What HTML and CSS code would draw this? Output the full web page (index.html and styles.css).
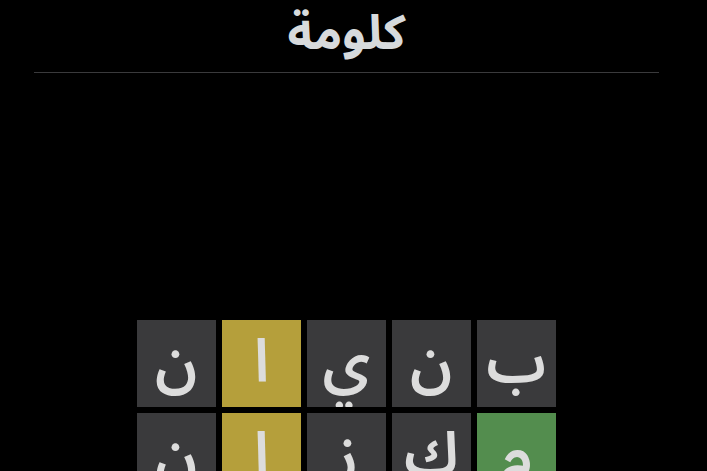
FILE: index.html
```html
<!DOCTYPE html>
<html lang="ar" dir="rtl">
<head>
<meta charset="utf-8">
<title>كلومة</title>
<link rel="stylesheet" href="styles.css">
</head>
<body>
<div class="app">
  <header class="header">
    <h1 class="title">كلومة</h1>
  </header>
  <main class="board">
    <div class="row">
      <div class="tile absent">ب</div>
      <div class="tile absent">ن</div>
      <div class="tile absent">ي</div>
      <div class="tile present">ا</div>
      <div class="tile absent">ن</div>
    </div>
    <div class="row">
      <div class="tile correct">م</div>
      <div class="tile absent">ك</div>
      <div class="tile absent">ز</div>
      <div class="tile present">ا</div>
      <div class="tile absent">ن</div>
    </div>
  </main>
</div>
</body>
</html>
```
FILE: styles.css
```css
html, body {
  margin: 0;
  padding: 0;
  background: #000;
  height: 100%;
  overflow: hidden;
}
body {
  font-family: "Noto Sans Arabic", "Noto Sans", sans-serif;
  color: #d7dadc;
}
.app {
  margin: 0 auto 0 34px;
  width: 625px;
}
.header {
  height: 72px;
  border-bottom: 1px solid #3a3a3c;
  display: flex;
  justify-content: center;
  align-items: flex-start;
}
.title {
  margin: 0;
  font-size: 48px;
  font-weight: bold;
  line-height: 68px;
  color: #d7dadc;
}
.board {
  padding-top: 247px;
  display: flex;
  flex-direction: column;
  align-items: center;
  gap: 6px;
}
.row {
  display: flex;
  gap: 6px;
}
.tile {
  width: 79px;
  height: 87px;
  overflow: hidden;
  text-align: center;
  font-family: "Noto Sans Arabic", sans-serif;
  font-size: 60px;
  font-weight: 600;
  line-height: 86px;
  color: #dcdcdc;
}
.absent { background: #3a3a3c; }
.present { background: #b59f3b; }
.correct { background: #538d4e; }
```
